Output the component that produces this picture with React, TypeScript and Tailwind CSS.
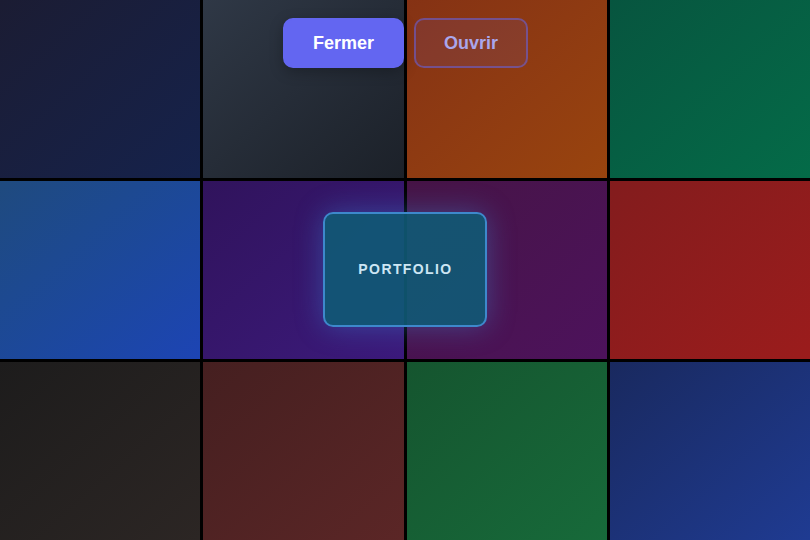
const tiles = [
  'from-[#1b1c33] to-[#15224c]',
  'from-[#2f3846] to-[#1c2129]',
  'from-[#853214] to-[#99440e]',
  'from-[#07553f] to-[#046b48]',
  'from-[#1f4a7e] to-[#1d44b4]',
  'from-[#30135c] to-[#3c1a7c]',
  'from-[#461446] to-[#4d125c]',
  'from-[#831c1d] to-[#9b1c1c]',
  'from-[#1d1c1c] to-[#2c2624]',
  'from-[#451f20] to-[#5b2626]',
  'from-[#15552f] to-[#176a3a]',
  'from-[#19295f] to-[#1f3b92]',
];

export default function App() {
  return (
    <div className="relative w-[810px] h-[540px] overflow-hidden bg-black font-['Liberation_Sans',Arial,sans-serif]">
      {/* Tile wall */}
      <div className="grid grid-cols-4 grid-rows-3 gap-[3px] w-full h-full">
        {tiles.map((t, i) => (
          <div key={i} className={`bg-linear-to-br ${t}`} />
        ))}
      </div>

      {/* Top buttons */}
      <div className="absolute top-[18px] left-0 right-0 flex justify-center gap-[10px] pl-[1px]">
        <button className="h-[50px] px-7 rounded-[10px] border-2 border-[#6366f1] bg-[#6366f1] text-white font-bold text-lg shadow-[0_4px_14px_rgba(0,0,0,0.25)]">
          Fermer
        </button>
        <button className="h-[50px] px-7 rounded-[10px] border-2 border-[#6366f1]/50 bg-[#6366f1]/10 text-[#aaa6ec] font-bold text-lg">
          Ouvrir
        </button>
      </div>

      {/* Center card */}
      <div className="absolute left-[323px] top-[212px] w-[164px] h-[115px] flex items-center justify-center rounded-[10px] border-2 border-[#4592dc]/85 bg-[#0f5a75]/90 shadow-[0_0_28px_rgba(56,160,240,0.35)]">
        <span className="text-[14px] font-bold tracking-[0.1em] text-[#cde6f4] pl-[1px]">PORTFOLIO</span>
      </div>
    </div>
  );
}
